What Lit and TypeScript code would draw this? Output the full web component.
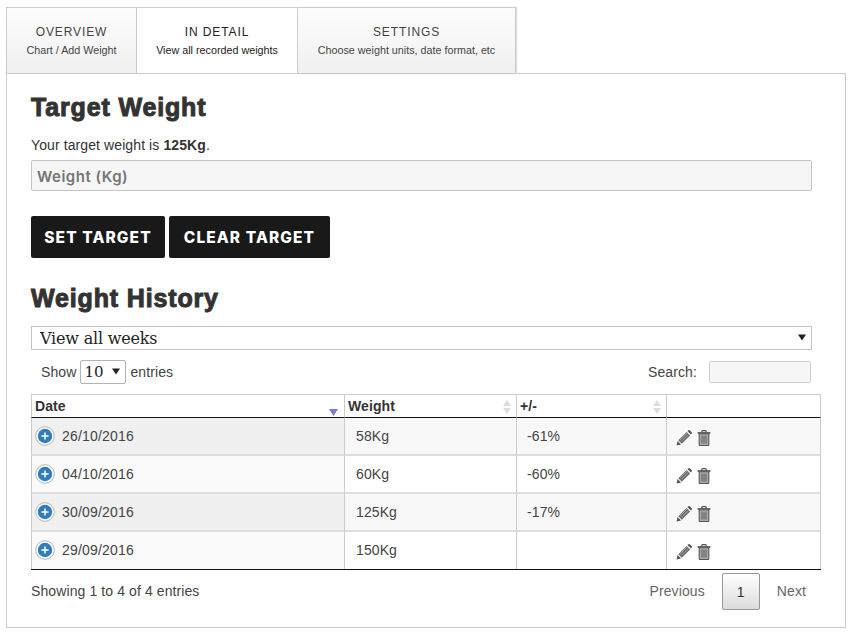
import { LitElement, html, css, svg } from "lit";
import { customElement } from "lit/decorators.js";

const rows = [
  { date: "26/10/2016", weight: "58Kg", diff: "-61%" },
  { date: "04/10/2016", weight: "60Kg", diff: "-60%" },
  { date: "30/09/2016", weight: "125Kg", diff: "-17%" },
  { date: "29/09/2016", weight: "150Kg", diff: "" },
];

const tabs = [
  { title: "Overview", sub: "Chart / Add Weight", cls: "t1" },
  { title: "In Detail", sub: "View all recorded weights", cls: "t2 active" },
  { title: "Settings", sub: "Choose weight units, date format, etc", cls: "t3" },
];

const plusIcon = svg`<svg class="plus" width="20" height="20" viewBox="0 0 20 20">
  <circle cx="10" cy="10" r="9.3" fill="#fff" stroke="#b5b5b5" stroke-width="1"/>
  <circle cx="10" cy="10" r="7.2" fill="#2f7dbd"/>
  <path d="M10 6.4v7.2M6.4 10h7.2" stroke="#fff" stroke-width="1.5"/>
</svg>`;

const pencilIcon = svg`<svg width="16" height="16" viewBox="0 0 16 16">
  <path d="M0.6 15.4 1.6 11 5 14.4Z" fill="#555"/>
  <path d="M2.3 10.2 10.6 1.9 14.1 5.4 5.8 13.7Z" fill="#6a6a6a"/>
  <path d="M4 10 11 3M5.4 11.4 12.4 4.4" stroke="#b4b4b4" stroke-width=".8"/>
  <path d="M11.4 1.1 12.4.3a1 1 0 0 1 1.3 0L15.7 2.3a1 1 0 0 1 0 1.3L14.9 4.6Z" fill="#555"/>
</svg>`;

const trashIcon = svg`<svg width="14" height="16" viewBox="0 0 14 16">
  <path d="M4.6 2.2 5.2.7h3.6l.6 1.5" fill="none" stroke="#555" stroke-width="1.2"/>
  <path d="M.6 2.1h12.8v1.7H.6Z" fill="#555"/>
  <path d="M2.2 3.8h9.6v10.9a.8.8 0 0 1-.8.8H3a.8.8 0 0 1-.8-.8Z" fill="#aaa" stroke="#555" stroke-width="1.1"/>
  <path d="M5 5.6v8M7 5.6v8M9 5.6v8" stroke="#555" stroke-width=".9"/>
</svg>`;

@customElement("app-root")
export class AppRoot extends LitElement {
  static styles = css`
    :host {
      display: block;
      width: 854px;
      height: 635px;
      overflow: hidden;
      box-sizing: border-box;
      padding: 7px 8px 0 6px;
      background: #fff;
      color: #333;
      font-family: "Liberation Sans", Arial, sans-serif;
      font-size: 14px;
      letter-spacing: 0.1px;
    }
    * { box-sizing: border-box; }

    .tabs { display: flex; height: 67px; margin-bottom: -1px; position: relative; }
    .tab {
      border: 1px solid #ccc;
      border-left-width: 0;
      background: linear-gradient(#fdfcfc, #f8f7f7 50%, #f0eff0);
      text-align: center;
      padding-top: 17px;
      color: #444;
    }
    .tab:first-child { border-left-width: 1px; }
    .tab.t3 { box-shadow: 1px 0 1px #ddd; }
    .t1 { width: 131px; }
    .t2 { width: 161px; }
    .t3 { width: 218px; }
    .tab.active { background: #fff; color: #222; }
    .tab-title {
      font-size: 12px;
      line-height: 14px;
      letter-spacing: 0.9px;
      text-transform: uppercase;
    }
    .tab-sub { font-size: 10.75px; letter-spacing: 0; line-height: 14px; margin-top: 4px; }

    .panel {
      width: 840px;
      height: 555px;
      border: 1px solid #ccc;
      padding: 18px 24px 0 24px;
    }
    h2 {
      margin: 0;
      font-size: 25px;
      line-height: 30px;
      font-weight: 700;
      color: #333;
      -webkit-text-stroke: 1px #333;
      letter-spacing: 0.85px;
    }
    .target-text { margin: 15px 0 7px; line-height: 16px; }
    .weight-input {
      display: block;
      width: 781px;
      height: 31px;
      border: 1px solid #c4c4c4;
      border-radius: 2px;
      background: #f6f6f6;
      padding: 1px 5px 0;
      font-family: Inter, sans-serif;
      font-size: 15px;
      font-weight: 600;
      letter-spacing: 0.5px;
      color: #333;
      outline: none;
    }
    .weight-input::placeholder { color: #757575; opacity: 1; }

    .buttons { display: flex; gap: 4px; margin: 25px 0 25px; }
    .btn {
      height: 42px;
      border: 0;
      border-radius: 2px;
      background: #191919;
      color: #fff;
      font-family: Inter, sans-serif;
      font-size: 15.5px;
      font-weight: 800;
      letter-spacing: 1.1px;
      padding: 0;
    }
    .btn.set { width: 134px; }
    .btn.clear { width: 161px; }

    .week-wrap { position: relative; width: 781px; height: 24px; margin-top: 13px; }
    .week-select {
      appearance: none;
      width: 100%;
      height: 24px;
      border: 1px solid #c4c4c4;
      background: #fff;
      padding: 0 0 0 8px;
      font-family: "DejaVu Serif", serif;
      font-size: 16px;
      letter-spacing: -0.2px;
      color: #222;
      border-radius: 0;
      outline: none;
    }
    .arrow { position: absolute; pointer-events: none; }
    .week-wrap .arrow { right: 6px; top: 8px; }

    .controls {
      display: flex;
      justify-content: space-between;
      align-items: center;
      height: 24px;
      margin-top: 10px;
      padding: 0 10px;
      color: #444;
    }
    .length { display: flex; align-items: center; gap: 4px; }
    .len-wrap { position: relative; width: 46px; height: 24px; }
    .len-select {
      appearance: none;
      width: 100%;
      height: 24px;
      border: 1px solid #b4b4b4;
      border-radius: 2px;
      background: #fff;
      padding: 0 0 0 3px;
      font-family: "DejaVu Serif", serif;
      font-size: 15px;
      color: #222;
      outline: none;
    }
    .len-wrap .arrow { right: 6px; top: 8px; }
    .search { display: flex; align-items: center; gap: 12px; }
    .search input {
      width: 102px;
      height: 22px;
      border: 1px solid #ccc;
      border-radius: 2px;
      background: #f6f6f6;
      outline: none;
    }

    table {
      table-layout: fixed;
      width: 790px;
      margin-top: 10px;
      border-collapse: separate;
      border-spacing: 0;
      border-bottom: 1px solid #111;
    }
    th {
      position: relative;
      height: 24px;
      padding: 0 3px;
      text-align: left;
      font-size: 14px;
      font-weight: 700;
      color: #333;
      border-top: 1px solid #ccc;
      border-right: 1px solid #ccc;
      border-bottom: 1px solid #111;
    }
    th:first-child { border-left: 1px solid #ccc; }
    .sort { position: absolute; right: 4px; top: 4px; }
    td {
      height: 38px;
      padding: 0 0 0 10px;
      color: #444;
      border-right: 1px solid #ccc;
      border-bottom: 2px solid #ddd;
      background: #fff;
    }
    td:first-child { border-left: 1px solid #ccc; padding-left: 3px; }
    td:nth-child(2) { padding-left: 11px; }
    td:last-child { padding-left: 9px; }
    tr:last-child td { border-bottom: 0; height: 37px; padding-bottom: 1px; }
    tr.odd td { background: #f8f8f8; }
    tr.odd td:first-child { background: #f0f0f0; }
    tr.even td:first-child { background: #fafafa; }
    .date-cell { display: flex; align-items: center; gap: 7px; letter-spacing: 0.2px; }
    .plus { display: block; }
    .actions { display: flex; align-items: center; gap: 5px; margin-top: 4px; }
    .actions svg { display: block; }

    .footer {
      display: flex;
      justify-content: space-between;
      align-items: center;
      width: 790px;
      margin-top: 3px;
      height: 37px;
      color: #444;
    }
    .footer-text { padding-bottom: 2px; }
    .pager { display: flex; align-items: center; gap: 17px; margin-right: 15px; color: #666; }
    .pager-link { padding-bottom: 2px; }
    .page {
      width: 38px;
      height: 37px;
      display: flex;
      align-items: center;
      justify-content: center;
      border: 1px solid #979797;
      border-radius: 2px;
      background: linear-gradient(#fff, #dcdcdc);
      color: #333;
    }
  `;

  private caret() {
    return html`<svg class="arrow" width="8" height="7" viewBox="0 0 8 7"><path d="M0 .5h8L4 6.5Z" fill="#222"/></svg>`;
  }

  private sortIcon(active: boolean) {
    if (active) {
      return html`<svg class="sort" style="top: 11px" width="12" height="12" viewBox="0 0 12 12"><path d="M1 3h9L5.5 10Z" fill="#7b7bd0"/></svg>`;
    }
    return html`<svg class="sort" width="10" height="16" viewBox="0 0 10 16"><path d="M1 7 5 1l4 6ZM1 9h8l-4 6Z" fill="#dcdcdc"/></svg>`;
  }

  render() {
    return html`
      <div class="tabs">
        ${tabs.map(
          (t) => html`<div class="tab ${t.cls}">
            <div class="tab-title">${t.title}</div>
            <div class="tab-sub">${t.sub}</div>
          </div>`
        )}
      </div>
      <div class="panel">
        <h2>Target Weight</h2>
        <p class="target-text">Your target weight is <b>125Kg</b>.</p>
        <input class="weight-input" placeholder="Weight (Kg)" />
        <div class="buttons">
          <button class="btn set">SET TARGET</button>
          <button class="btn clear">CLEAR TARGET</button>
        </div>
        <h2>Weight History</h2>
        <div class="week-wrap">
          <select class="week-select"><option>View all weeks</option></select>
          ${this.caret()}
        </div>
        <div class="controls">
          <div class="length">
            Show
            <span class="len-wrap">
              <select class="len-select"><option>10</option></select>
              ${this.caret()}
            </span>
            entries
          </div>
          <label class="search">Search: <input /></label>
        </div>
        <table>
          <colgroup>
            <col style="width: 314px" />
            <col style="width: 172px" />
            <col style="width: 150px" />
            <col style="width: 154px" />
          </colgroup>
          <thead>
            <tr>
              <th>Date${this.sortIcon(true)}</th>
              <th>Weight${this.sortIcon(false)}</th>
              <th>+/-${this.sortIcon(false)}</th>
              <th></th>
            </tr>
          </thead>
          <tbody>
            ${rows.map(
              (r, i) => html`<tr class=${i % 2 ? "even" : "odd"}>
                <td><div class="date-cell">${plusIcon}${r.date}</div></td>
                <td>${r.weight}</td>
                <td>${r.diff}</td>
                <td><div class="actions">${pencilIcon}${trashIcon}</div></td>
              </tr>`
            )}
          </tbody>
        </table>
        <div class="footer">
          <div class="footer-text">Showing 1 to 4 of 4 entries</div>
          <div class="pager">
            <span class="pager-link">Previous</span>
            <span class="page">1</span>
            <span class="pager-link">Next</span>
          </div>
        </div>
      </div>
    `;
  }
}
